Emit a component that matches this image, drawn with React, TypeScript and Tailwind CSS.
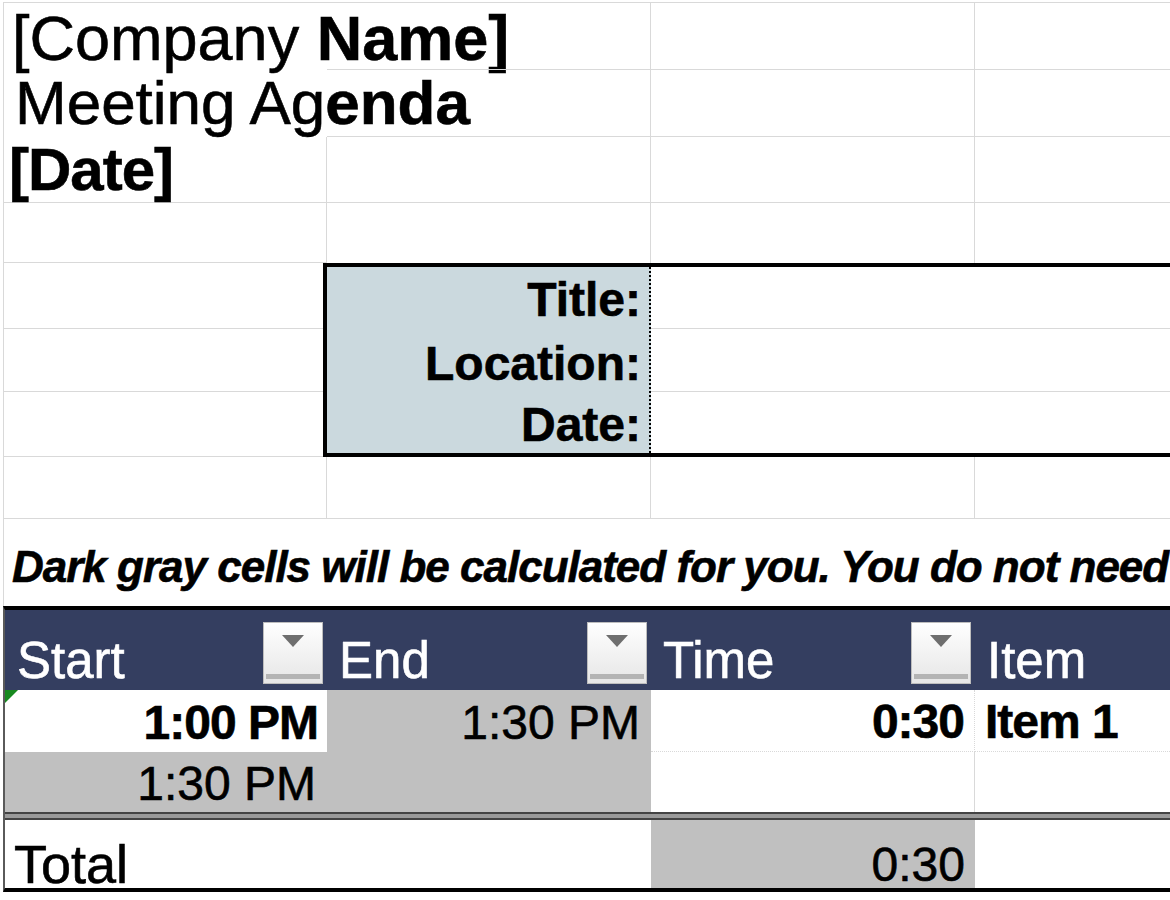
import React from "react"

const grid = "border-[#d9d9d9]"

function FilterButton() {
  return (
    <div className="w-[60px] h-[62px] shrink-0 flex flex-col bg-linear-to-b from-white to-[#e6e6e6] border border-[#bdbdbd]">
      <div className="flex-1 flex justify-center pt-[12px]">
        <svg width="22" height="13" viewBox="0 0 22 13">
          <polygon points="0,0 22,0 11,12" fill="#6e6e6e" />
        </svg>
      </div>
      <div className="h-[5px] mx-[2px] mb-[4px] bg-[#b4b4b4]" />
    </div>
  )
}

function HeaderCell({ label, width, button }: { label: string; width: string; button?: boolean }) {
  return (
    <div className={`${width} shrink-0 h-full flex items-end justify-between pr-[4px]`}>
      <span className="pl-[12px] pb-[4px] text-[51px] leading-none text-white">{label}</span>
      {button && (
        <div className="self-start mt-[12px]">
          <FilterButton />
        </div>
      )}
    </div>
  )
}

export default function App() {
  return (
    <div className="w-[1170px] h-[900px] overflow-hidden bg-white text-black font-['Liberation_Sans',Arial,sans-serif] [-webkit-text-stroke-width:0.6px]">
      <div className="pl-[3px] pt-[2px] w-[1400px]">
        {/* top section with plain gridlines */}
        <div className={`border-t border-l ${grid}`}>
          {/* Company name */}
          <div className="h-[67px] flex">
            <div className="w-[323px] shrink-0 flex items-end pl-[8px] whitespace-nowrap text-[63px] leading-none">
              <span>
                [Company <span className="font-bold">Name]</span>
              </span>
            </div>
            <div className={`w-[324px] shrink-0 border-b border-r ${grid}`} />
            <div className={`w-[324px] shrink-0 border-b border-r ${grid}`} />
            <div className={`flex-1 border-b ${grid}`} />
          </div>

          {/* Meeting Agenda */}
          <div className="h-[67px] flex">
            <div className="w-[323px] shrink-0 flex items-end pl-[11px] pb-[3px] whitespace-nowrap text-[62px] leading-none">
              <span>
                Meeting Ag<span className="font-bold">enda</span>
              </span>
            </div>
            <div className={`w-[324px] shrink-0 border-b border-r ${grid}`} />
            <div className={`w-[324px] shrink-0 border-b border-r ${grid}`} />
            <div className={`flex-1 border-b ${grid}`} />
          </div>

          {/* Date */}
          <div className="h-[66px] flex">
            <div className={`w-[323px] shrink-0 flex items-end pl-[5px] pb-[2px] border-b border-r ${grid} text-[60px] leading-none font-bold tracking-[-1px]`}>
              [Date]
            </div>
            <div className={`w-[324px] shrink-0 border-b border-r ${grid}`} />
            <div className={`w-[324px] shrink-0 border-b border-r ${grid}`} />
            <div className={`flex-1 border-b ${grid}`} />
          </div>

          {/* blank row above the box */}
          <div className="h-[60px] flex">
            <div className={`w-[323px] shrink-0 border-b border-r ${grid}`} />
            <div className={`w-[324px] shrink-0 border-r ${grid}`} />
            <div className={`w-[324px] shrink-0 border-r ${grid}`} />
            <div className="flex-1" />
          </div>

          {/* meeting details box */}
          <div className="h-[194px] flex">
            <div className="w-[319px] shrink-0 flex flex-col">
              <div className={`h-[66px] border-b ${grid}`} />
              <div className={`h-[63px] border-b ${grid}`} />
              <div className={`h-[65px] border-b ${grid}`} />
            </div>
            <div className="flex-1 flex border-4 border-black">
              <div className="w-[324px] shrink-0 flex flex-col bg-[#cbd9de] border-r-2 border-dotted border-black text-[48px] leading-none font-bold">
                <div className="h-[62px] flex items-end justify-end pr-[8px] pb-[5px]">Title:</div>
                <div className="h-[63px] flex items-end justify-end pr-[8px] pb-[4px]">Location:</div>
                <div className="h-[61px] flex items-end justify-end pr-[8px] pb-[4px]">Date:</div>
              </div>
              <div className="flex-1 flex flex-col">
                <div className={`h-[62px] border-b ${grid}`} />
                <div className={`h-[63px] border-b ${grid}`} />
                <div className="flex-1" />
              </div>
            </div>
          </div>

          {/* blank row below the box */}
          <div className="h-[62px] flex">
            <div className={`w-[323px] shrink-0 border-b border-r ${grid}`} />
            <div className={`w-[324px] shrink-0 border-b border-r ${grid}`} />
            <div className={`w-[324px] shrink-0 border-b border-r ${grid}`} />
            <div className={`flex-1 border-b ${grid}`} />
          </div>

          {/* instruction */}
          <div className="h-[87px] flex items-end pl-[8px] pb-[17px] whitespace-nowrap text-[44px] leading-none font-bold italic tracking-[-1px]">
            Dark gray cells will be calculated for you. You do not need to enter anything into them.
          </div>
        </div>

        {/* agenda table */}
        <div className="border-l-2 border-l-[#5a5a5a] border-t-4 border-t-black border-b-4 border-b-black">
          <div className="h-[80px] flex bg-[#343e60]">
            <HeaderCell label="Start" width="w-[322px]" button />
            <HeaderCell label="End" width="w-[324px]" button />
            <HeaderCell label="Time" width="w-[324px]" button />
            <HeaderCell label="Item" width="flex-1" />
          </div>

          <div className="h-[62px] flex text-[48px] leading-none">
            <div className="relative w-[322px] shrink-0 flex items-end justify-end pr-[9px] pb-[5px] font-bold tracking-[-1px]">
              <svg className="absolute left-0 top-0" width="13" height="13" viewBox="0 0 13 13">
                <polygon points="0,0 13,0 0,13" fill="#17891f" />
              </svg>
              1:00 PM
            </div>
            <div className="w-[324px] shrink-0 flex items-end justify-end pr-[11px] pb-[5px] bg-[#c0c0c0]">1:30 PM</div>
            <div className={`w-[324px] shrink-0 flex items-end justify-end pr-[10px] pb-[5px] font-bold tracking-[-1px] border-b border-r border-dotted ${grid}`}>
              0:30
            </div>
            <div className={`flex-1 flex items-end pl-[10px] pb-[5px] font-bold tracking-[-1px] border-b border-dotted ${grid}`}>
              Item 1
            </div>
          </div>

          <div className="h-[60px] flex text-[48px] leading-none">
            <div className="w-[322px] shrink-0 flex items-end justify-end pr-[11px] pb-[4px] bg-[#c0c0c0]">1:30 PM</div>
            <div className="w-[324px] shrink-0 bg-[#c0c0c0]" />
            <div className={`w-[324px] shrink-0 border-r ${grid}`} />
            <div className="flex-1" />
          </div>

          <div className="h-[8px] border-y-2 border-[#444444] bg-[#9a9a9a]" />

          <div className="h-[68px] flex">
            <div className="w-[322px] shrink-0 flex items-end pl-[9px] pb-[1px] text-[54px] leading-[46px]">Total</div>
            <div className="w-[324px] shrink-0" />
            <div className="w-[324px] shrink-0 flex items-end justify-end pr-[10px] pb-[3px] bg-[#c0c0c0] text-[48px] leading-[40px]">
              0:30
            </div>
            <div className="flex-1" />
          </div>
        </div>
      </div>
    </div>
  )
}
